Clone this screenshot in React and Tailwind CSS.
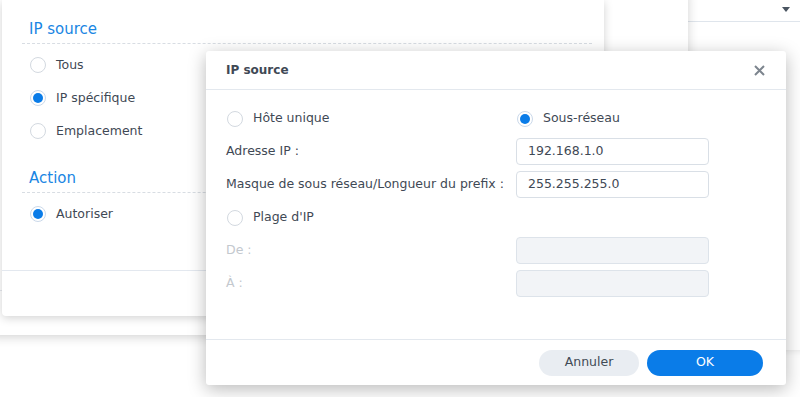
import React from "react";

function Radio({ checked }) {
  return (
    <span
      className={
        "flex h-[16px] w-[16px] shrink-0 items-center justify-center rounded-full border bg-white " +
        (checked ? "border-[#cbd9ea]" : "border-[#d3d9e0]")
      }
    >
      {checked && <span className="h-[10px] w-[10px] rounded-full bg-[#0a7ce8]" />}
    </span>
  );
}

function RadioRow({ label, checked }) {
  return (
    <div className="flex h-[22px] items-center gap-[10px]">
      <Radio checked={checked} />
      <span>{label}</span>
    </div>
  );
}

function Input({ value, disabled }) {
  return (
    <div
      className={
        "flex h-[27px] w-[193px] items-center rounded-[4px] border px-[11px] " +
        (disabled ? "border-[#dde3ea] bg-[#f2f4f7]" : "border-[#d9dfe6] bg-white")
      }
    >
      {value}
    </div>
  );
}

export default function App() {
  return (
    <div
      className="relative h-[397px] w-[800px] overflow-hidden bg-white text-[12.5px] text-[#3f4955]"
      style={{ fontFamily: '"DejaVu Sans", Verdana, sans-serif' }}
    >
      {/* right window (behind) */}
      <div className="absolute left-[688px] top-[-10px] h-[360px] w-[130px] bg-white shadow-[0_0_8px_rgba(0,0,0,0.12)]">
        <div className="flex h-[32px] items-center justify-end border-b border-[#dfe5ec] pr-[28px] pt-[8px]">
          <svg width="8" height="5" viewBox="0 0 8 5">
            <path d="M0 0 L8 0 L4 5 Z" fill="#4a5561" />
          </svg>
        </div>
      </div>

      {/* middle window */}
      <div className="absolute left-[-10px] top-[-10px] flex h-[345px] w-[698px] flex-col bg-white shadow-[0_2px_10px_rgba(0,0,0,0.18)]">
        <div className="flex-1" />
        <div className="h-[45px] border-t border-[#e6e9ee]" />
      </div>

      {/* left panel */}
      <div className="absolute left-[2px] top-0 flex h-[316px] w-[602px] flex-col rounded-b-[4px] bg-white shadow-[0_2px_10px_rgba(0,0,0,0.18)]">
        <div className="flex-1 pl-[20px] pr-[12px]">
          <div className="flex h-[44px] items-end border-b border-dashed border-[#d8dde3] pb-[4px] pl-[7px]">
            <span className="text-[15px] leading-[20px] text-[#1a86e3]">IP source</span>
          </div>
          <div className="mt-[10px] flex flex-col gap-[11px] pl-[8px]">
            <RadioRow label="Tous" />
            <RadioRow label="IP spécifique" checked />
            <RadioRow label="Emplacement" />
          </div>
          <div className="mt-[7px] flex h-[44px] items-end border-b border-dashed border-[#d8dde3] pb-[4px] pl-[7px]">
            <span className="text-[15px] leading-[20px] text-[#1a86e3]">Action</span>
          </div>
          <div className="mt-[10px] flex flex-col gap-[11px] pl-[8px]">
            <RadioRow label="Autoriser" checked />
          </div>
        </div>
        <div className="h-[46px] border-t border-[#e3e8ef]" />
      </div>

      {/* dialog */}
      <div className="absolute left-[206px] top-[51px] flex h-[334px] w-[580px] flex-col rounded-[3px] bg-white shadow-[0_4px_18px_rgba(0,0,0,0.28)]">
        <div className="flex h-[39px] shrink-0 items-center justify-between border-b border-[#e3e8ee] pl-[20px] pr-[21px]">
          <span className="text-[12px] font-bold">IP source</span>
          <svg width="11" height="11" viewBox="0 0 11 11">
            <path d="M1 1 L10 10 M10 1 L1 10" stroke="#7d858e" strokeWidth="2" />
          </svg>
        </div>
        <div className="flex-1 pl-[20px] pt-[15px]">
          <div className="flex flex-col gap-[6px]">
            <div className="flex h-[27px] items-center">
              <div className="w-[290px] pl-[1px]">
                <RadioRow label="Hôte unique" />
              </div>
              <div className="pl-[1px]">
                <RadioRow label="Sous-réseau" checked />
              </div>
            </div>
            <div className="flex h-[27px] items-center">
              <span className="w-[290px]">Adresse IP :</span>
              <Input value="192.168.1.0" />
            </div>
            <div className="flex h-[27px] items-center">
              <span className="w-[290px]">Masque de sous réseau/Longueur du prefix :</span>
              <Input value="255.255.255.0" />
            </div>
            <div className="flex h-[27px] items-center pl-[1px]">
              <RadioRow label="Plage d'IP" />
            </div>
            <div className="flex h-[27px] items-center">
              <span className="w-[290px] text-[#c3c8ce]">De :</span>
              <Input value="" disabled />
            </div>
            <div className="flex h-[27px] items-center">
              <span className="w-[290px] text-[#c3c8ce]">À :</span>
              <Input value="" disabled />
            </div>
          </div>
        </div>
        <div className="flex h-[46px] shrink-0 items-center justify-end gap-[8px] border-t border-[#e3e8ee] pr-[23px]">
          <button className="h-[26px] w-[100px] rounded-full bg-[#e9edf2] text-[#414b55]">Annuler</button>
          <button className="h-[26px] w-[116px] rounded-full bg-[#0a7ce8] text-white">OK</button>
        </div>
      </div>
    </div>
  );
}
